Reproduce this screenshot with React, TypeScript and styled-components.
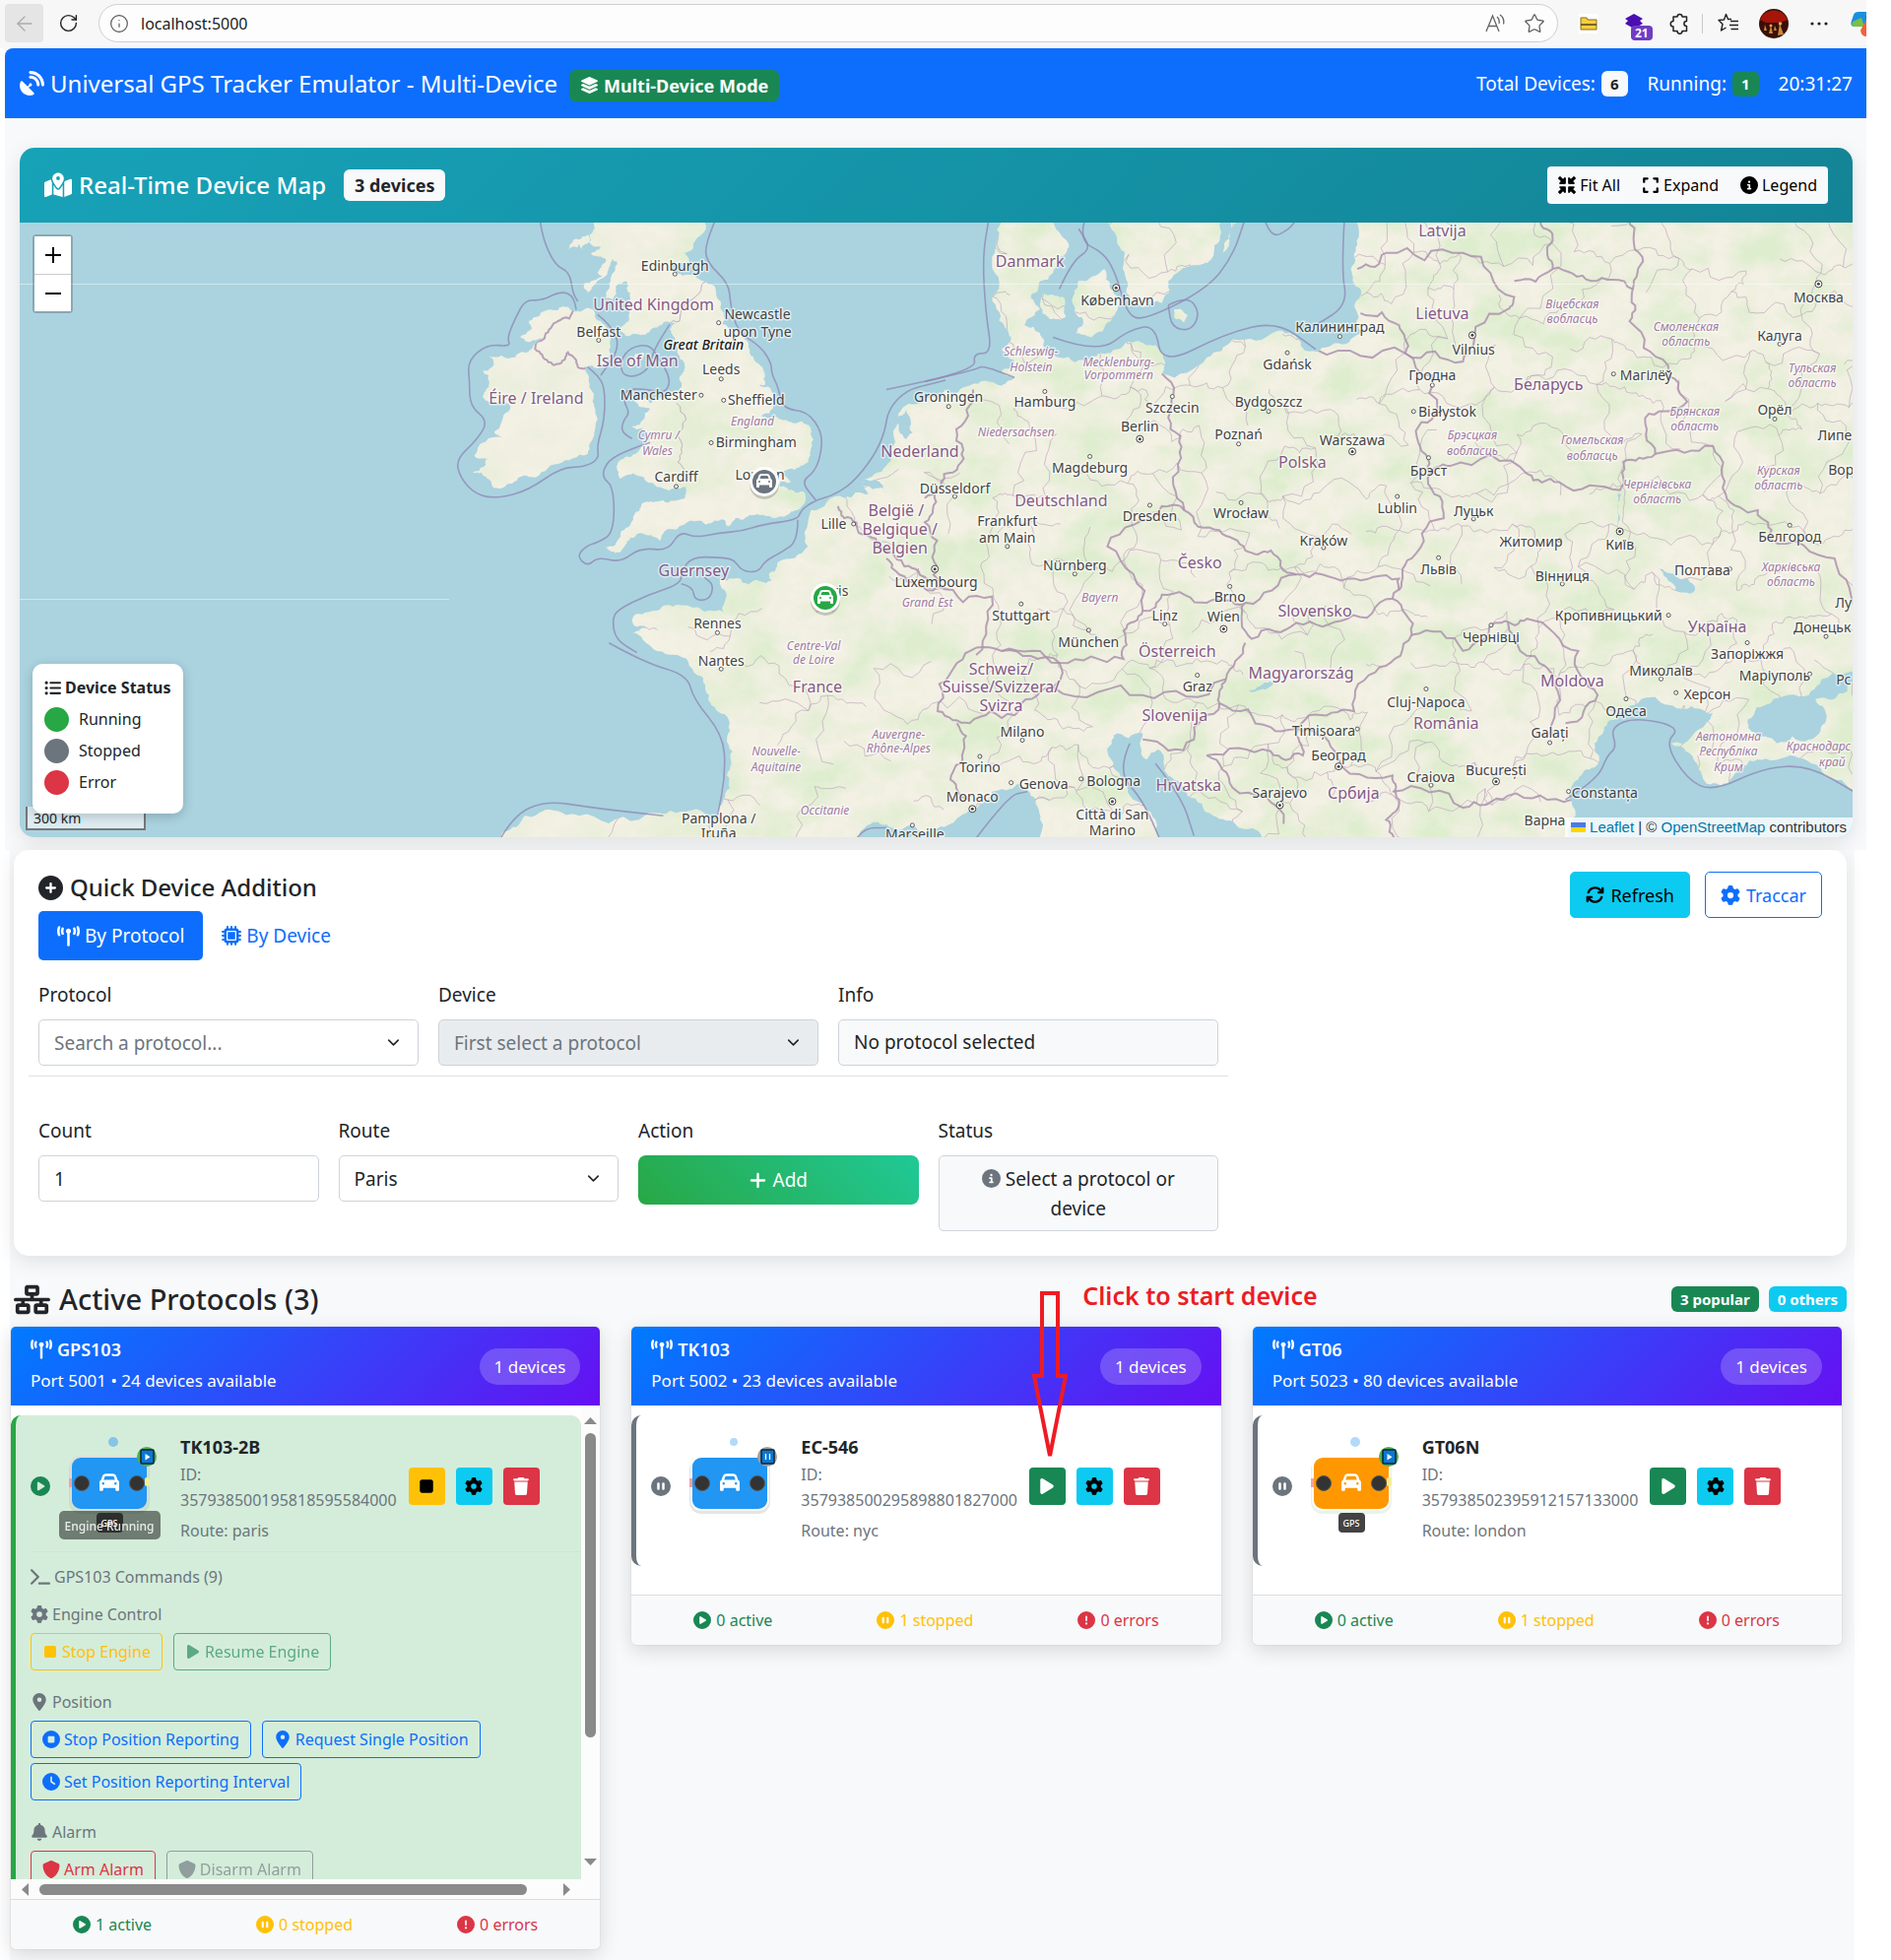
import React from "react";
import styled, { createGlobalStyle, css } from "styled-components";
import {
  FaSatelliteDish, FaLayerGroup, FaMapLocationDot, FaMinimize, FaExpand, FaCircleInfo, FaListUl,
  FaCirclePlus, FaTowerBroadcast, FaMicrochip, FaArrowsRotate, FaGear, FaPlus, FaNetworkWired,
  FaCirclePlay, FaCirclePause, FaCircleExclamation, FaTerminal, FaStop, FaPlay, FaLocationDot,
  FaCircleStop, FaClock, FaBell, FaShield, FaTrash, FaCar,
} from "react-icons/fa6";
import { ArrowLeft, RotateCw, Info, Star, Puzzle, ChevronDown } from "lucide-react";

const font = '"Noto Sans", "Open Sans", sans-serif';

const GlobalStyle = createGlobalStyle`
  *, *::before, *::after { box-sizing: border-box; }
  body { margin: 0; background: #fff; color: #212529; font-family: ${font}; font-size: 19px; line-height: 30px; }
  button, input, select { font: inherit; color: inherit; margin: 0; }
  button { cursor: pointer; }
  h1, h2, h3, h4, p, ul { margin: 0; padding: 0; font-weight: 400; list-style: none; }
`;

/* ---------- browser chrome ---------- */

const Chrome = styled.div`
  display: flex;
  align-items: center;
  height: 49px;
  margin-right: 25px;
  padding: 0 0 2px 5px;
  background: #f7f7f7;
  overflow: hidden;
`;
const ChromeButton = styled.button<{ $muted?: boolean }>`
  display: grid;
  place-items: center;
  flex: none;
  width: 39px;
  height: 39px;
  padding: 0;
  margin-right: 6px;
  border: 0;
  border-radius: 4px;
  background: ${(p) => (p.$muted ? "#e5e5e5" : "transparent")};
  color: ${(p) => (p.$muted ? "#ababab" : "#222")};
`;
const AddressBar = styled.label`
  display: flex;
  align-items: center;
  flex: 1;
  gap: 12px;
  height: 39px;
  margin: 0 8px 0 5px;
  padding: 0 12px 0 10px;
  border: 1px solid #cfcfcf;
  border-radius: 20px;
  background: #fdfdfd;
  color: #555;
`;
const AddressInput = styled.input`
  flex: 1;
  min-width: 0;
  padding: 0;
  border: 0;
  outline: 0;
  background: transparent;
  color: #222;
  font-size: 16px;
`;
const ChromeIcons = styled.div`
  display: flex;
  align-items: center;
  gap: 18px;
`;
const Slot = styled.div`
  position: relative;
  display: grid;
  place-items: center;
  flex: none;
  width: 46px;
  height: 39px;
  color: #222;
`;
const Tools = styled.div`
  display: flex;
  align-items: center;
  width: 305px;
`;
const ToolDivider = styled.div`
  flex: none;
  width: 4px;
  height: 20px;
  border-left: 1px solid #c9c9c9;
`;
const CountBadge = styled.span`
  position: absolute;
  left: 20px;
  top: 22px;
  padding: 0 4px;
  border-radius: 4px;
  background: #6f3cc3;
  color: #fff;
  font-size: 12px;
  font-weight: 700;
  line-height: 15px;
`;

/* ---------- page shell ---------- */

const TopSection = styled.section`
  margin: 0 25px 0 5px;
  background: #f8f9fa;
`;
const Navbar = styled.header`
  display: flex;
  align-items: center;
  justify-content: space-between;
  height: 71px;
  padding: 0 14px 0 15px;
  border-top-left-radius: 8px;
  background: #0d6efd;
  color: #fff;
`;
const Brand = styled.h1`
  display: flex;
  align-items: center;
  gap: 6px;
  font-size: 24px;
`;
const Stats = styled.div`
  display: flex;
  align-items: center;
  gap: 20px;
`;
const Stat = styled.span`
  display: flex;
  align-items: center;
  gap: 6px;
`;
const tones = {
  green: "background:#198754;color:#fff;",
  light: "background:#f8f9fa;color:#212529;",
  cyan: "background:#0dcaf0;color:#fff;",
};
const Badge = styled.span<{ $tone: keyof typeof tones; $large?: boolean }>`
  display: inline-flex;
  align-items: center;
  gap: 5px;
  padding: ${(p) => (p.$large ? "0 11px" : "0 9px")};
  border-radius: 6px;
  font-size: ${(p) => (p.$large ? 18 : 15)}px;
  font-weight: 700;
  line-height: ${(p) => (p.$large ? 32 : 26)}px;
  ${(p) => tones[p.$tone]}
`;
const BrandBadge = styled.span`
  display: flex;
  margin: 4px 0 0 6px;
`;

/* ---------- map ---------- */

const MapArea = styled.div`
  padding: 30px 14px 13px 15px;
`;
const MapCard = styled.section`
  border-radius: 15px;
  overflow: hidden;
  box-shadow: 0 5px 20px rgba(0, 0, 0, 0.1);
`;
const MapHeader = styled.div`
  display: flex;
  align-items: center;
  justify-content: space-between;
  height: 76px;
  padding: 0 25px;
  background: linear-gradient(135deg, #17a2b8, #138496);
  color: #fff;
`;
const MapTitle = styled.h2`
  display: flex;
  align-items: center;
  gap: 7px;
  font-size: 24px;
  font-weight: 500;
`;
const MapButtons = styled.div`
  display: flex;
  height: 38px;
  border-radius: 4px;
  background: #f8f9fa;
`;
const MapButton = styled.button`
  display: flex;
  align-items: center;
  gap: 4px;
  padding: 0 11px;
  border: 0;
  background: transparent;
  color: #000;
  font-size: 16px;
`;
const MapView = styled.div`
  position: relative;
  height: 624px;
  background: #aad3df;
  overflow: hidden;
`;
const MapDrawing = styled.svg`
  display: block;
  width: 100%;
  height: 100%;
`;
const ZoomControl = styled.div`
  position: absolute;
  left: 13px;
  top: 12px;
  display: grid;
  border: 2px solid rgba(0, 0, 0, 0.2);
  border-radius: 4px;
  background-clip: padding-box;
`;
const ZoomButton = styled.button`
  display: grid;
  place-items: center;
  width: 37px;
  height: 38px;
  padding: 0;
  border: 0;
  background: #fff;
  color: #000;
  & + & { border-top: 1px solid #ccc; }
`;
const Legend = styled.div`
  position: absolute;
  left: 13px;
  bottom: 24px;
  z-index: 2;
  padding: 8px 12px 16px;
  border-radius: 10px;
  background: #fff;
  box-shadow: 0 3px 12px rgba(0, 0, 0, 0.2);
  font-size: 16px;
  line-height: 32px;
`;
const LegendTitle = styled.h3`
  display: flex;
  align-items: center;
  gap: 4px;
  font-size: 16px;
  font-weight: 700;
`;
const LegendRow = styled.li`
  display: flex;
  align-items: center;
  gap: 10px;
`;
const Dot = styled.i<{ $color: string }>`
  width: 25px;
  height: 25px;
  border-radius: 50%;
  background: ${(p) => p.$color};
`;
const Scale = styled.div`
  position: absolute;
  left: 6px;
  bottom: 7px;
  width: 122px;
  height: 24px;
  padding: 2px 0 0 6px;
  border: 2px solid #777;
  border-top: 0;
  background: rgba(255, 255, 255, 0.6);
  font-size: 14px;
  line-height: 20px;
`;
const Attribution = styled.div`
  position: absolute;
  right: 0;
  bottom: 0;
  display: flex;
  align-items: center;
  gap: 4px;
  padding: 0 6px;
  background: rgba(255, 255, 255, 0.8);
  color: #333;
  font-family: "Liberation Sans", sans-serif;
  font-size: 15px;
  line-height: 20px;
  a { color: #0078a8; text-decoration: none; }
`;

/* ---------- quick addition ---------- */

const LowerSection = styled.section`
  margin: 0 37px 0 10px;
  background: #f8f9fa;
`;
const QuickCard = styled.section`
  margin: 0 8px 0 4px;
  padding: 22px 25px 25px;
  border-radius: 15px;
  background: #fff;
  box-shadow: 0 5px 20px rgba(0, 0, 0, 0.1);
`;
const QuickHead = styled.div`
  display: flex;
  justify-content: space-between;
  height: 40px;
`;
const QuickTitle = styled.h2`
  display: flex;
  align-items: center;
  gap: 7px;
  height: 32px;
  font-size: 24px;
  font-weight: 500;
`;
const Row = styled.div<{ $gap: number }>`
  display: flex;
  gap: ${(p) => p.$gap}px;
`;
const ActionButton = styled.button<{ $outline?: boolean }>`
  display: flex;
  align-items: center;
  gap: 6px;
  height: 47px;
  padding: 0 15px;
  border: 1px solid ${(p) => (p.$outline ? "#0d6efd" : "#0dcaf0")};
  border-radius: 5px;
  background: ${(p) => (p.$outline ? "#fff" : "#0dcaf0")};
  color: ${(p) => (p.$outline ? "#0d6efd" : "#000")};
  font-size: 18px;
`;
const Tab = styled.button<{ $active?: boolean }>`
  display: flex;
  align-items: center;
  gap: 5px;
  height: 50px;
  padding: 0 19px;
  border: 0;
  border-radius: 5px;
  background: ${(p) => (p.$active ? "#0d6efd" : "transparent")};
  color: ${(p) => (p.$active ? "#fff" : "#0d6efd")};
`;
const FormColumns = styled.div`
  display: grid;
  grid-template-columns: 2fr 1fr;
  gap: 14px;
  padding-top: 20px;
`;
const FieldGrid = styled.div<{ $columns: number }>`
  display: grid;
  grid-template-columns: repeat(${(p) => p.$columns}, 1fr);
  align-items: start;
  gap: 20px;
`;
const Rule = styled.hr`
  margin: 10px -10px 40px;
  border: 0;
  border-top: 1px solid #dee2e6;
`;
const Field = styled.div`
  display: grid;
  gap: 10px;
`;
const controlBox = css`
  width: 100%;
  border: 1px solid #ced4da;
  border-radius: 5px;
  padding: 0 15px;
`;
const TextInput = styled.input`
  ${controlBox}
  height: 47px;
  background: #fff;
`;
const SelectWrap = styled.div`
  position: relative;
  svg { position: absolute; right: 16px; top: 14px; pointer-events: none; }
`;
const Select = styled.select<{ $placeholder?: boolean }>`
  ${controlBox}
  height: 47px;
  appearance: none;
  background: #fff;
  color: ${(p) => (p.$placeholder ? "#6c757d" : "#212529")};
  opacity: 1;
  &:disabled { background: #e9ecef; }
`;
const Notice = styled.output<{ $center?: boolean }>`
  ${controlBox}
  display: block;
  padding: ${(p) => (p.$center ? "8px 34px 7px" : "8px 15px")};
  background: #f8f9fa;
  text-align: ${(p) => (p.$center ? "center" : "left")};
  line-height: ${(p) => (p.$center ? 30 : 29)}px;
  svg { color: #6c757d; vertical-align: -2px; margin-right: 5px; }
`;
const AddButton = styled.button`
  display: flex;
  align-items: center;
  justify-content: center;
  gap: 5px;
  height: 50px;
  border: 0;
  border-radius: 8px;
  background: linear-gradient(45deg, #28a745, #20c997);
  color: #fff;
`;

/* ---------- protocol cards ---------- */

const ProtocolHead = styled.div`
  display: flex;
  align-items: center;
  justify-content: space-between;
  height: 72px;
  padding: 16px 8px 0 4px;
`;
const ProtocolTitle = styled.h2`
  display: flex;
  align-items: center;
  gap: 9px;
  font-size: 29px;
  font-weight: 500;
`;
const CardGrid = styled.div`
  display: grid;
  grid-template-columns: repeat(3, 1fr);
  align-items: start;
  gap: 32px;
  padding: 0 13px 12px 1px;
`;
const CardSlot = styled.div`
  position: relative;
`;
const Card = styled.article`
  border-radius: 5px;
  overflow: hidden;
  background: #fff;
  box-shadow: 0 5px 20px rgba(0, 0, 0, 0.14), 0 0 1px rgba(0, 0, 0, 0.3);
`;
const CardHead = styled.div`
  display: flex;
  align-items: center;
  justify-content: space-between;
  height: 80px;
  padding: 0 20px;
  background: linear-gradient(135deg, #007bff, #6610f2);
  color: #fff;
`;
const CardName = styled.h3`
  display: flex;
  align-items: center;
  gap: 5px;
  font-size: 18px;
  font-weight: 600;
`;
const CardPort = styled.p`
  padding-top: 2px;
  padding-bottom: 3px;
  font-size: 17px;
`;
const Pill = styled.span`
  padding: 0 15px;
  border-radius: 19px;
  background: rgba(255, 255, 255, 0.2);
  font-size: 17px;
  line-height: 37px;
`;
const ScrollBody = styled.div`
  display: grid;
  grid-template-columns: 1fr 19px;
`;
const Viewport = styled.div<{ $clipped?: boolean }>`
  padding-top: 10px;
  ${(p) => (p.$clipped ? "max-height: 481px; overflow: hidden;" : "padding-bottom: 29px;")}
`;
const DeviceItem = styled.div<{ $running?: boolean }>`
  min-height: 153px;
  padding: 18px 0 6px 15px;
  border-left: 5px solid ${(p) => (p.$running ? "#28a745" : "#6c757d")};
  border-radius: 10px;
  background: ${(p) => (p.$running ? "#d4edda" : "#fff")};
`;
const DeviceRow = styled.div`
  display: flex;
  align-items: center;
`;
const StatusIcon = styled.span<{ $running?: boolean }>`
  display: flex;
  color: ${(p) => (p.$running ? "#198754" : "#6c757d")};
`;
const Avatar = styled.svg`
  flex: none;
  width: 112px;
  height: 124px;
  margin: -8px 12px -8px 8px;
`;
const DeviceInfo = styled.div`
  margin-bottom: -4px;
  color: #6c757d;
  font-size: 16px;
  line-height: 26px;
`;
const DeviceName = styled.h4`
  padding-bottom: 2px;
  color: #212529;
  font-size: 18px;
  font-weight: 700;
`;
const Route = styled.p`
  padding-top: 5px;
`;
const DeviceButtons = styled.div`
  display: flex;
  gap: 11px;
  padding-left: 12px;
`;
const buttonTones = {
  yellow: "background:#ffc107;color:#000;",
  green: "background:#198754;color:#fff;",
  cyan: "background:#0dcaf0;color:#000;",
  red: "background:#dc3545;color:#fff;",
};
const IconButton = styled.button<{ $tone: keyof typeof buttonTones }>`
  display: grid;
  place-items: center;
  width: 37px;
  height: 38px;
  padding: 0;
  border: 0;
  border-radius: 4px;
  ${(p) => buttonTones[p.$tone]}
`;
const Commands = styled.div`
  margin-top: 12px;
  padding-top: 12px;
  border-top: 1px solid rgba(0, 0, 0, 0.03);
  color: #6c757d;
  font-size: 16px;
  line-height: 26px;
`;
const CommandLabel = styled.div`
  display: flex;
  align-items: center;
  gap: 4px;
`;
const CommandGroup = styled.div`
  padding: 12px 0 7px;
`;
const CommandButtons = styled.div`
  display: flex;
  flex-wrap: wrap;
  gap: 5px 11px;
  padding-top: 6px;
`;
const CommandButton = styled.button<{ $color: string; $faded?: boolean }>`
  display: flex;
  align-items: center;
  gap: 4px;
  height: 38px;
  padding: 0 11px;
  border: 1px solid ${(p) => p.$color};
  border-radius: 4px;
  background: transparent;
  color: ${(p) => p.$color};
  opacity: ${(p) => (p.$faded ? 0.65 : 1)};
`;
const VerticalBar = styled.div`
  display: flex;
  flex-direction: column;
  align-items: center;
  padding: 9px 0 11px;
  background: #fcfcfc;
`;
const HorizontalBar = styled.div`
  display: flex;
  align-items: center;
  height: 20px;
  padding: 0 27px 0 8px;
  background: #fcfcfc;
`;
const Arrow = styled.svg`
  flex: none;
  width: 13px;
  height: 13px;
  fill: #8a8a8a;
`;
const Track = styled.div<{ $vertical?: boolean }>`
  flex: 1;
  display: flex;
  padding: ${(p) => (p.$vertical ? "6px 0" : "0 8px")};
`;
const Thumb = styled.div<{ $vertical?: boolean }>`
  ${(p) => (p.$vertical ? "width: 11px; height: 73%;" : "height: 11px; width: 95%;")}
  border-radius: 6px;
  background: #8a8a8a;
`;
const CardFoot = styled.footer`
  display: flex;
  align-items: center;
  justify-content: space-around;
  height: 51px;
  padding: 0 10px;
  border-top: 1px solid #dcdddd;
  background: #f8f9fa;
  font-size: 16px;
`;
const Tally = styled.span<{ $color: string }>`
  display: flex;
  align-items: center;
  gap: 5px;
  color: ${(p) => p.$color};
`;
const Callout = styled.div`
  position: absolute;
  left: 407px;
  top: -47px;
  z-index: 3;
  display: flex;
  align-items: flex-start;
  gap: 15px;
  color: #ed1c24;
  font-size: 25px;
  font-weight: 600;
  white-space: nowrap;
  pointer-events: none;
`;
const CalloutArrow = styled.svg`
  width: 36px;
  height: 176px;
  margin-top: 10px;
`;

/* ---------- map geometry ---------- */

type Pt = [number, number];

const pairs = (s: string): Pt[] => s.trim().split(/\s+/).map((p) => p.split(",").map(Number) as Pt);
/* survey sheets, each with its own scale, share the same drawing */
const west = (s: string): Pt[] => pairs(s).map(([x, y]) => [x * 0.6122 - 20, y * 0.4082 - 6]);
const east = (s: string): Pt[] => pairs(s).map(([x, y]) => [x * 0.6505 + 880, y * 0.4082 - 6]);
const isles = (s: string): Pt[] => pairs(s).map(([x, y]) => [x / 3 + 420, y / 3]);

const makeRandom = (seed: number) => () => {
  seed = (seed * 1664525 + 1013904223) % 4294967296;
  return seed / 4294967296;
};

/* midpoint displacement turns coarse outlines into coast-like lines */
function roughen(points: Pt[], amount: number, depth: number, seed = 7): Pt[] {
  const rnd = makeRandom(seed + Math.round(points[0][0] * 13));
  let list = points;
  for (let d = 0; d < depth; d++) {
    const next: Pt[] = [];
    for (let i = 0; i < list.length - 1; i++) {
      const [ax, ay] = list[i];
      const [bx, by] = list[i + 1];
      const len = Math.hypot(bx - ax, by - ay);
      const off = (rnd() - 0.5) * amount * len;
      next.push(list[i], [(ax + bx) / 2 - ((by - ay) / (len || 1)) * off, (ay + by) / 2 + ((bx - ax) / (len || 1)) * off]);
    }
    next.push(list[list.length - 1]);
    list = next;
  }
  return list;
}
const line = (pts: Pt[]) => "M" + pts.map(([x, y]) => `${x.toFixed(1)} ${y.toFixed(1)}`).join("L");
const area = (pts: Pt[]) => line(roughen([...pts, pts[0]], 0.4, 3)) + "Z";
const smooth = (pts: Pt[]) => {
  let d = `M${pts[0][0]} ${pts[0][1]}`;
  for (let i = 1; i < pts.length - 1; i++) {
    d += `Q${pts[i][0]} ${pts[i][1]} ${(pts[i][0] + pts[i + 1][0]) / 2} ${(pts[i][1] + pts[i + 1][1]) / 2}`;
  }
  const end = pts[pts.length - 1];
  return d + `L${end[0]} ${end[1]}`;
};

const continent: Pt[] = [
  ...east("92,430 130,420 180,420 200,400 180,385 200,360 180,330 195,300 185,275 165,200 165,100 175,50 180,-20 260,-20 285,70 270,110 260,140 240,160 225,200 240,230 215,270 240,290 245,320 270,350 320,350 350,340 390,310 420,320 430,390 500,350 540,305 610,285 640,300 660,335 700,315 740,290 735,240 740,180 725,130 735,70 730,-10"),
  ...east("760,-700 2200,-700 2500,800 2200,2600 300,2600 245,1600 240,1500 225,1440 205,1410 165,1430 130,1475 100,1510 60,1535"),
  ...west("1500,1520 1460,1510 1430,1525 1415,1580 1400,2100 825,2100 820,1580 835,1530 870,1490 905,1475 960,1490 1060,1500 1130,1480 1190,1500 1200,1450 1206,1390 1215,1330 1210,1260 1180,1215 1170,1165 1150,1130 1130,1095 1080,1070 1050,1035 1075,1025 1055,1020 1050,995 1090,980 1125,965 1165,980 1200,985 1195,900 1215,900 1240,915 1280,905 1275,890 1290,860 1340,820 1345,730 1400,700 1440,690 1430,660 1470,620 1485,560 1490,490 1530,460"),
];
const lands: Pt[][] = [
  continent,
  isles("470,-20 490,20 475,60 510,75 480,95 525,110 500,150 515,165 460,185 470,215 490,190 530,150 545,110 560,120 540,170 525,230 545,235 555,195 590,180 600,215 585,250 600,270 570,320 590,345 620,340 660,330 700,305 735,305 720,325 735,350 745,400 765,430 750,470 750,510 700,535 660,550 610,540 625,560 660,565 640,600 605,620 640,630 660,660 630,690 600,715 558,745 570,780 620,770 650,790 700,810 770,805 765,840 700,845 650,850 625,880 600,920 560,970 525,990 565,1005 600,960 630,945 690,970 710,935 770,915 830,920 885,905 900,925 920,900 980,890 1040,900 1090,880 1130,855 1125,820 1080,815 1050,800 1090,790 1060,770 1115,745 1145,715 1158,660 1150,625 1120,605 1060,600 1040,590 1000,590 1035,565 1035,520 1015,500 960,490 1010,495 990,430 960,370 930,330 880,310 875,240 830,180 800,165 745,155 720,130 780,120 760,90 790,80 800,50 830,20 830,-20"),
  isles("395,255 355,265 290,300 300,325 265,350 300,360 340,350 300,385 250,410 165,405 185,430 150,450 170,490 150,530 200,545 235,560 210,600 185,640 210,655 125,710 180,710 150,745 120,760 165,780 180,805 240,795 300,775 380,735 470,705 490,640 490,560 475,500 465,440 530,420 540,380 520,310 490,270 440,270"),
  west("960,60 975,45 980,60 965,80"),
  isles("595,440 615,400 640,395 625,430"),
  isles("410,80 450,50 470,40 440,75"),
  east("350,-20 360,60 370,120 375,190 400,225 430,215 440,160 480,120 500,115 520,60 530,-20"),
  east("245,190 275,200 280,250 255,255 240,220"),
  east("300,160 340,130 350,180 365,200 350,260 320,300 295,290 305,250 290,210"),
  east("450,230 470,245 465,265 452,255"),
  east("530,60 545,15 548,5 535,5 525,90"),
];
const waters: Pt[][] = [
  east("355,1290 400,1285 405,1350 425,1325 440,1390 470,1440 510,1490 550,1520 610,1600 430,1600 420,1500 380,1440 370,1400 345,1330"),
  east("1050,1640 1065,1540 1065,1440 1080,1400 1105,1370 1105,1310 1120,1270 1150,1230 1200,1195 1245,1225 1290,1235 1280,1260 1225,1310 1265,1360 1280,1410 1320,1395 1360,1350 1410,1340 1460,1380 1520,1430 1700,1500 1700,1900"),
  east("1345,1250 1380,1210 1440,1190 1460,1150 1530,1130 1500,1180 1450,1200 1465,1260 1440,1300 1390,1310 1350,1280"),
  east("1200,870 1230,890 1262,930 1250,935 1220,905"),
  east("1141,690 1147,690 1145,750 1140,770"),
  east("565,1180 600,1155 605,1160 575,1182"),
  isles("1410,600 1440,570 1460,640 1440,660"),
  isles("1310,780 1360,790 1370,810 1310,800"),
];
const nationalBorders = [
  "60,700 90,640 120,580 125,480 135,430", "80,920 165,945 140,1090",
  "110,1110 180,1080 270,1110 260,1170 200,1240 130,1260 80,1230 110,1110", "110,1260 120,1330 100,1400 130,1450",
  "180,1080 270,1110 370,1100 370,1030 400,980 345,820 430,720 465,730", "430,390 440,500 460,600 465,730 520,780 560,830 600,830 640,890",
  "400,980 430,940 500,960 560,960 640,890 720,900 800,900 790,950 720,1000 640,1010 570,1050 560,960",
  "800,930 820,850 870,750 845,650 830,560 860,480 810,340 670,330", "740,240 800,270 810,340 900,360 970,230 980,200 900,90 780,90 735,130",
  "980,160 1040,130 1100,160 1165,180 1160,260 1220,370 1250,460 1190,490 1200,590 1150,610 1145,680 1050,660 1000,640 880,620 845,650",
  "1040,130 1040,60 1020,5", "1200,590 1290,570 1310,690 1360,730 1380,800 1480,850 1520,1000",
  "790,950 820,1040 900,1080 960,1010 1000,1000 1080,1080 1110,1190 1060,1260", "970,1010 1030,1120 1040,1290",
  "560,1060 530,1150 520,1210 600,1270 660,1240 730,1230 770,1120 820,1040", "260,1170 400,1190 530,1150", "400,1300 480,1300 520,1210",
  "500,1340 600,1330 650,1340 640,1270 700,1330 790,1390 800,1450 780,1500 790,1560", "500,1340 540,1420 620,1510", "790,1430 900,1470 970,1440 1070,1450",
  "1165,180 1180,100 1160,5", "0,850 20,890 80,920 75,860 60,760 75,690",
].map(east).concat([
  west("1390,720 1400,750 1430,790 1465,830 1500,870 1540,910"),
  isles("435,265 380,300 340,345 310,385 350,425 385,430 410,395 440,440 470,440"),
]);
const regionBorders = [
  isles("740,550 770,600 745,650 755,690 745,730 780,760"),
  isles("830,180 810,215 750,300 715,310"),
];
const seaBorders = [
  isles("325,-10 330,40 370,130 415,150 425,215 440,240"),
  isles("435,265 430,225 390,208 330,238 280,235 250,290 225,350 235,378 165,370 105,420 110,485 112,560 168,605 130,665 70,720 80,775 130,830 200,840 290,815 390,745 460,745 505,720 498,680 522,600 522,500 500,465 470,440"),
  isles("860,-10 828,65 832,120 900,185 905,250 925,330 1000,380 1030,430 1030,460 1050,500 1065,568 1140,575 1185,640 1180,710 1160,760 1120,790 1165,845"),
  isles("605,658 570,640 580,600 598,580 580,545 585,510 640,505 700,520 720,495 715,460 690,420 660,370 600,380 570,420 575,465 620,470 660,440 670,390 720,310"),
  isles("500,280 540,310 570,380 510,465"),
  isles("660,670 600,690 530,725 512,775 550,805 550,945 500,975 470,982 436,1015 470,1048 500,1018 570,1036 630,990 715,1000 750,940 800,960 870,945 940,940 1000,920 1110,905 1120,875 1165,845 1215,832 1275,795 1340,715 1375,640 1385,570 1440,510 1520,490 1560,480"),
  isles("1110,905 1110,970 1060,1005 1010,1030 990,1065 940,1062 915,1025 870,1020 790,1018 755,1060 755,1100 650,1135 560,1180 545,1210 555,1270 620,1310"),
  isles("755,1100 790,1108 795,1150 840,1150 855,1105 825,1080"),
  west("1010,1060 1070,1110 1140,1140 1150,1200 1200,1290 1203,1390 1190,1490"), west("825,1560 850,1490 905,1452 980,1470 1100,1490"),
  west("1415,1560 1430,1520 1470,1520"),
  east("60,410 140,380 135,340 165,340 155,240 150,100 160,5"), east("0,430 60,410 140,380 150,370 200,400"),
  east("310,5 300,60 340,90 360,150 375,240 400,260 500,180 540,100 560,5"), east("260,300 330,340 380,280 420,270 430,370 530,290 610,260 670,330"),
  east("440,220 470,195 490,240 475,285 445,275 440,220"), east("590,5 600,55 630,30 640,5"), east("715,5 710,130 720,220 670,270"),
  east("270,180 290,110 320,80 300,30"), east("140,1546 190,1440 220,1430"), east("380,1310 360,1380 400,1450 430,1560"), east("420,1360 460,1440 480,1540"),
  east("1060,1450 1110,1400 1125,1340 1140,1320 1130,1270 1170,1245 1240,1270 1215,1310 1250,1400 1290,1430 1370,1370 1440,1365 1510,1430"),
];

/* jittered grid of administrative lines */
function adminLines(): string {
  const rnd = makeRandom(42);
  const cols = 42;
  const rows = 15;
  const grid: Pt[][] = [];
  for (let r = 0; r < rows; r++) {
    grid.push([]);
    for (let c = 0; c < cols; c++) grid[r].push([540 + c * 34 + (rnd() - 0.5) * 30 + (r % 2) * 16, r * 46 - 10 + (rnd() - 0.5) * 32]);
  }
  let d = "";
  for (let r = 0; r < rows - 1; r++) {
    for (let c = 0; c < cols - 1; c++) {
      if (c < 8 && r < 8) continue;
      if (c < 13 && rnd() < 0.55) continue;
      if (rnd() < 0.72) d += line(roughen([grid[r][c], grid[r][c + 1]], 0.6, 3, r * 50 + c));
      if (rnd() < 0.5) d += line(roughen([grid[r][c], grid[r + 1][c]], 0.6, 3, r * 70 + c));
    }
  }
  return d;
}

const landPath = lands.map(area).join("");
const adminPath = adminLines();

/* label positions are on a 1513-wide sheet */
const K = 1.269;
type Label = [string, number, number];
const countries: Label[] = [
  ["United Kingdom", 523, 244], ["Isle of Man", 510, 289], ["Éire / Ireland", 429, 319], ["Danmark", 824, 210], ["Latvija", 1154, 185],
  ["Lietuva", 1154, 251], ["Беларусь", 1239, 308], ["Polska", 1042, 370], ["Nederland", 736, 362], ["België /", 717, 409],
  ["Belgique /", 720, 424], ["Belgien", 720, 439], ["Deutschland", 849, 401], ["Guernsey", 555, 457], ["France", 654, 550],
  ["Česko", 960, 451], ["Slovensko", 1052, 489], ["Österreich", 942, 522], ["Schweiz/", 801, 536], ["Suisse/Svizzera/", 801, 550],
  ["Svizra", 801, 565], ["Magyarország", 1041, 539], ["Slovenija", 940, 573], ["Hrvatska", 951, 629], ["Србија", 1083, 635],
  ["România", 1157, 579], ["Moldova", 1258, 545], ["Україна", 1374, 502],
];
const regions: Label[] = [
  ["England", 602, 338], ["Cymru /", 527, 349], ["Wales", 526, 361], ["Schleswig-", 825, 282], ["Holstein", 825, 294], ["Mecklenburg-", 895, 290],
  ["Vorpommern", 895, 301], ["Niedersachsen", 813, 346], ["Віцебская", 1258, 244], ["вобласць", 1258, 256], ["Смоленская", 1349, 262], ["область", 1349, 274],
  ["Тульская", 1450, 295], ["область", 1450, 307], ["Брянская", 1356, 330], ["область", 1356, 342], ["Брэсцкая", 1178, 349], ["вобласць", 1178, 361],
  ["Гомельская", 1274, 353], ["вобласць", 1274, 365], ["Чернігівська", 1326, 388], ["область", 1326, 400], ["Курская", 1423, 377], ["область", 1423, 389],
  ["Харківська", 1433, 454], ["область", 1433, 466], ["Grand Est", 742, 483], ["Bayern", 880, 479], ["Centre-Val", 651, 517], ["de Loire", 651, 528],
  ["Auvergne-", 719, 588], ["Rhône-Alpes", 719, 599], ["Nouvelle-", 621, 602], ["Aquitaine", 621, 614], ["Occitanie", 660, 649],
  ["Автономна", 1383, 590], ["Республіка", 1383, 602], ["Крим", 1383, 614], ["Краснодарс", 1455, 598], ["край", 1466, 610],
];
/* name, x, y, then the town dot */
const cities: [string, number, number, number?, number?][] = [
  ["Edinburgh", 540, 213, 540, 220], ["Newcastle", 606, 252, 575, 259], ["upon Tyne", 606, 266], ["Belfast", 479, 266, 479, 273],
  ["Leeds", 577, 296, 577, 304], ["Manchester", 527, 316, 561, 317], ["Sheffield", 605, 320, 579, 321], ["Birmingham", 605, 354, 569, 355],
  ["Cardiff", 541, 382, 541, 390], ["London", 608, 380], ["Lille", 667, 420, 683, 420], ["Paris", 666, 473], ["Rennes", 574, 499, 574, 507],
  ["Nantes", 577, 529, 577, 536], ["Pamplona /", 575, 655], ["Iruña", 575, 667], ["Marseille", 732, 668, 730, 661], ["København", 894, 241],
  ["Калининград", 1072, 262, 1072, 270], ["Vilnius", 1179, 280], ["Калуга", 1424, 269, 1424, 276], ["Москва", 1455, 238],
  ["Gdańsk", 1030, 292, 1030, 283], ["Гродна", 1146, 301, 1146, 309], ["Магілёў", 1317, 301, 1291, 300], ["Groningen", 759, 318, 759, 326],
  ["Hamburg", 836, 322, 836, 314], ["Szczecin", 938, 327, 938, 318], ["Bydgoszcz", 1015, 322, 1015, 330], ["Białystok", 1158, 330, 1131, 330],
  ["Орёл", 1420, 328, 1420, 336], ["Berlin", 912, 342], ["Poznań", 991, 348, 991, 356], ["Warszawa", 1082, 353], ["Липе", 1468, 349],
  ["Magdeburg", 872, 375, 872, 366], ["Брэст", 1143, 377, 1143, 367], ["Вор", 1473, 376], ["Düsseldorf", 764, 391, 764, 398],
  ["Dresden", 920, 413, 920, 405], ["Wrocław", 993, 411, 993, 403], ["Lublin", 1118, 407, 1118, 398], ["Луцьк", 1179, 409, 1179, 416],
  ["Frankfurt", 806, 417], ["am Main", 806, 431, 806, 438], ["Kraków", 1059, 433, 1059, 439], ["Житомир", 1225, 434, 1248, 433],
  ["Київ", 1296, 436], ["Белгород", 1432, 430, 1432, 421], ["Nürnberg", 860, 453, 860, 460], ["Львів", 1151, 456, 1151, 447],
  ["Вінниця", 1250, 461, 1250, 468], ["Полтава", 1362, 457, 1384, 456], ["Luxembourg", 749, 466], ["Brno", 984, 478, 984, 470],
  ["Stuttgart", 817, 493, 817, 484], ["Linz", 932, 493, 932, 500], ["Wien", 979, 494], ["Кропивницький", 1287, 493, 1335, 493], ["Лу", 1475, 483],
  ["München", 871, 514, 871, 505], ["Чернівці", 1193, 510, 1193, 501], ["Донецьк", 1458, 502, 1461, 510], ["Запоріжжя", 1398, 524, 1398, 515],
  ["Миколаїв", 1329, 537, 1329, 544], ["Маріуполь", 1420, 541, 1448, 540], ["Graz", 958, 550, 958, 541], ["Cluj-Napoca", 1141, 562, 1141, 552],
  ["Херсон", 1366, 556, 1341, 555], ["Одеса", 1301, 569, 1301, 560], ["Milano", 818, 586, 818, 593], ["Timișoara", 1059, 585, 1086, 584],
  ["Galați", 1240, 587, 1240, 595], ["Torino", 784, 614, 784, 606], ["Београд", 1071, 605], ["Genova", 835, 628, 809, 627],
  ["Bologna", 891, 625, 865, 624], ["București", 1197, 617], ["Craiova", 1145, 622, 1145, 629], ["Monaco", 778, 638], ["Sarajevo", 1024, 635],
  ["Constanța", 1284, 635, 1255, 634], ["Città di San", 890, 652], ["Marino", 890, 665], ["Варна", 1236, 657], ["Рс", 1475, 544],
];
const capitals: Pt[] = [
  [893, 231], [1178, 269], [1455, 228], [912, 352], [1082, 362], [1296, 426], [748, 456], [979, 504], [1071, 614], [1197, 626], [778, 648], [1024, 645], [890, 642],
];
const mx = (x: number) => x * K - 20;
const my = (y: number) => y * K - 227;

const MapLabel = styled.text<{ $kind: "country" | "region" | "city" | "island" }>`
  font-family: "Noto Sans", "DejaVu Sans", sans-serif;
  font-size: ${(p) => ({ country: 16, region: 12, city: 14, island: 14 }[p.$kind])}px;
  font-style: ${(p) => (p.$kind === "region" || p.$kind === "island" ? "italic" : "normal")};
  font-weight: ${(p) => (p.$kind === "island" ? 500 : 400)};
  fill: ${(p) => ({ country: "#855a86", region: "#a07ba3", city: "#444", island: "#222" }[p.$kind])};
  stroke: rgba(255, 255, 255, 0.6);
  stroke-width: 3px;
  stroke-linejoin: round;
  paint-order: stroke;
  text-anchor: middle;
  dominant-baseline: central;
`;

function CarMarker({ x, y, color }: { x: number; y: number; color: string }) {
  return (
    <g>
      <circle cx={x} cy={y + 3} r={15} fill="rgba(0,0,0,.18)" />
      <circle cx={x} cy={y} r={15} fill="#fff" />
      <circle cx={x} cy={y} r={12} fill={color} />
      <FaCar x={x - 8} y={y - 9} size={16} color="#fff" />
    </g>
  );
}

function EuropeMap() {
  return (
    <MapDrawing viewBox="0 0 1861 624" preserveAspectRatio="xMidYMid slice" role="img" aria-label="Map of Europe">
      <defs>
        <clipPath id="land"><path d={landPath} /></clipPath>
        <filter id="forest" x="0" y="0" width="100%" height="100%">
          <feTurbulence type="fractalNoise" baseFrequency="0.017 0.022" numOctaves={5} seed={11} />
          <feColorMatrix values="0 0 0 0 0.71  0 0 0 0 0.84  0 0 0 0 0.60  3.4 0 0 0 -1.45" />
        </filter>
        <filter id="fields" x="0" y="0" width="100%" height="100%">
          <feTurbulence type="fractalNoise" baseFrequency="0.06" numOctaves={3} seed={3} />
          <feColorMatrix values="0 0 0 0 0.80  0 0 0 0 0.87  0 0 0 0 0.68  0 3 0 0 -1.4" />
        </filter>
        <linearGradient id="fade" x1="0" x2="1">
          <stop offset="0.3" stopColor="#fff" stopOpacity="0.3" />
          <stop offset="0.42" stopColor="#fff" stopOpacity="0.9" />
        </linearGradient>
        <mask id="greens"><rect width="1861" height="624" fill="url(#fade)" /></mask>
      </defs>
      <rect width="1861" height="624" fill="#aad3df" />
      <path d={landPath} fill="#f3f0e4" />
      <g clipPath="url(#land)">
        <g mask="url(#greens)">
          <rect width="1861" height="624" filter="url(#forest)" />
          <rect width="1861" height="624" filter="url(#fields)" opacity={0.6} />
        </g>
        <path d={adminPath} fill="none" stroke="#b79fb9" strokeWidth={1} opacity={0.6} />
        {regionBorders.map((b, i) => <path key={i} d={line(roughen(b, 0.45, 2, i))} fill="none" stroke="#b79fb9" opacity={0.8} />)}
        {nationalBorders.map((b, i) => (
          <path key={i} d={line(roughen(b, 0.45, 3, i))} fill="none" stroke="#ab92ae" strokeWidth={2} opacity={0.85} />
        ))}
      </g>
      {waters.map((w, i) => <path key={i} d={area(w)} fill="#aad3df" />)}
      {seaBorders.map((b, i) => <path key={i} d={smooth(b)} fill="none" stroke="#8f86b2" strokeWidth={1.6} opacity={0.75} />)}
      <path d="M0 62.5H1861M0 382.5H436" stroke="#fff" strokeOpacity={0.45} strokeWidth={1} />
      {cities.map(([name, , , x, y]) => x && y && <circle key={name + x} cx={mx(x)} cy={my(y)} r={2} fill="#fff" stroke="#555" />)}
      {capitals.map(([x, y]) => (
        <g key={x}>
          <circle cx={mx(x)} cy={my(y)} r={3.5} fill="#fff" stroke="#444" />
          <circle cx={mx(x)} cy={my(y)} r={1.5} fill="#444" />
        </g>
      ))}
      {regions.map(([name, x, y]) => <MapLabel key={name + x + y} $kind="region" x={mx(x)} y={my(y)}>{name}</MapLabel>)}
      {countries.map(([name, x, y]) => <MapLabel key={name} $kind="country" x={mx(x)} y={my(y)}>{name}</MapLabel>)}
      {cities.map(([name, x, y]) => <MapLabel key={name} $kind="city" x={mx(x)} y={my(y)}>{name}</MapLabel>)}
      <MapLabel $kind="island" x={mx(563)} y={my(276)}>Great Britain</MapLabel>
      <CarMarker x={756} y={263} color="#6c757d" />
      <CarMarker x={818} y={381} color="#28a745" />
    </MapDrawing>
  );
}

/* ---------- device picture ---------- */

type Device = { name: string; id: string; route: string; body: string; running?: boolean; playing?: boolean; gps?: boolean };

const Tiny = styled.text<{ $size: number }>`
  font-family: ${font};
  font-size: ${(p) => p.$size}px;
  font-weight: 500;
  fill: #fff;
  text-anchor: middle;
  dominant-baseline: central;
`;

function DevicePicture({ device }: { device: Device }) {
  const on = device.playing;
  return (
    <Avatar viewBox="0 0 112 124" role="img" aria-label={device.name}>
      <circle cx={56} cy={17} r={on ? 5 : 4} fill={device.running ? "#86c5e6" : "#b3d9fb"} />
      <rect x={11} y={33} width={82} height={57} rx={12} fill={on ? "#2e7d32" : "#000"} opacity={0.1} />
      <rect x={12} y={31} width={80} height={56} rx={11} fill={device.running ? "#dcdcdc" : "#fff"} opacity={0.8} />
      <rect x={14} y={33} width={76} height={52} rx={9} fill={device.body} />
      <rect x={11} y={54} width={3} height={9} fill="#f3a0a0" />
      {on && <rect x={88} y={53} width={5} height={9} rx={2} fill="#f6ee8f" />}
      <circle cx={24} cy={59} r={7.5} fill="#333" stroke="#555" />
      <circle cx={80} cy={59} r={7.5} fill="#333" stroke="#555" />
      <FaCar x={42} y={48} size={20} color="#fff" />
      <circle cx={90} cy={32} r={10} fill={on ? "#4caf50" : "#9e9e9e"} />
      <rect x={84} y={25} width={13} height={14} rx={1} fill="#0a78d4" stroke="#123" strokeWidth={1.5} />
      {on ? <path d="M88.500 29v6.500l5-3.250z" fill="#fff" /> : <path d="M88.500 29v6M92.500 29v6" stroke="#fff" strokeWidth={1.3} />}
      {device.running && <rect x={1} y={87} width={103} height={29} rx={5} fill="#000" opacity={0.48} />}
      {(device.running || device.gps) && <rect x={39} y={89} width={27} height={20} rx={4} fill="#222" opacity={0.85} />}
      {device.gps && <Tiny $size={9} x={52} y={99}>GPS</Tiny>}
      {device.running && <Tiny $size={12} x={52} y={102} opacity={0.85}>Engine Running</Tiny>}
    </Avatar>
  );
}

function DeviceEntry({ device, children }: { device: Device; children?: React.ReactNode }) {
  return (
    <DeviceItem $running={device.running}>
      <DeviceRow>
        <StatusIcon $running={device.running}>{device.running ? <FaCirclePlay size={20} /> : <FaCirclePause size={20} />}</StatusIcon>
        <DevicePicture device={device} />
        <DeviceInfo>
          <DeviceName>{device.name}</DeviceName>
          <p>ID:</p>
          <p>{device.id}</p>
          <Route>Route: {device.route}</Route>
        </DeviceInfo>
        <DeviceButtons>
          <IconButton $tone={device.running ? "yellow" : "green"} aria-label={device.running ? "Stop" : "Start"}>
            {device.running ? <FaStop size={18} /> : <FaPlay size={18} />}
          </IconButton>
          <IconButton $tone="cyan" aria-label="Settings"><FaGear size={18} /></IconButton>
          <IconButton $tone="red" aria-label="Delete"><FaTrash size={18} /></IconButton>
        </DeviceButtons>
      </DeviceRow>
      {children}
    </DeviceItem>
  );
}

function CardHeader({ name, port, available }: { name: string; port: number; available: number }) {
  return (
    <CardHead>
      <div>
        <CardName><FaTowerBroadcast size={22} />{name}</CardName>
        <CardPort>Port {port} • {available} devices available</CardPort>
      </div>
      <Pill>1 devices</Pill>
    </CardHead>
  );
}

function CardFooter({ active, stopped }: { active: number; stopped: number }) {
  return (
    <CardFoot>
      <Tally $color="#198754"><FaCirclePlay size={18} />{active} active</Tally>
      <Tally $color="#ffc107"><FaCirclePause size={18} />{stopped} stopped</Tally>
      <Tally $color="#dc3545"><FaCircleExclamation size={18} />0 errors</Tally>
    </CardFoot>
  );
}

const tracker: Device = { name: "TK103-2B", id: "357938500195818595584000", route: "paris", body: "#2196f3", running: true, playing: true, gps: true };
const nyc: Device = { name: "EC-546", id: "357938500295898801827000", route: "nyc", body: "#2196f3" };
const london: Device = { name: "GT06N", id: "357938502395912157133000", route: "london", body: "#ff9800", playing: true, gps: true };

function BrowserChrome() {
  return (
    <Chrome>
      <ChromeButton $muted aria-label="Back"><ArrowLeft size={24} strokeWidth={1.3} /></ChromeButton>
      <ChromeButton aria-label="Reload"><RotateCw size={21} strokeWidth={1.6} /></ChromeButton>
      <AddressBar>
        <Info size={20} strokeWidth={1.4} />
        <AddressInput aria-label="Address" defaultValue="localhost:5000" />
        <ChromeIcons>
          <svg width="22" height="22" viewBox="0 0 22 22" fill="none" stroke="#666" strokeWidth="1.3">
            <path d="M2 19L8.500 3L15 19M4.500 13.500H12.500M13 4q3 2.500 2 7M16 2q5 3.500 3.500 9.500" />
          </svg>
          <Star size={22} strokeWidth={1.3} />
        </ChromeIcons>
      </AddressBar>
      <Tools>
        <Slot>
          <svg width="20" height="20" viewBox="0 0 20 20">
            <rect width="20" height="20" fill="#fff" />
            <path d="M2 4h6l1 2h9v10H2z" fill="#f6cf3d" stroke="#8a6d1a" />
            <path d="M2 11h16" stroke="#4d4225" strokeWidth="1.5" />
          </svg>
        </Slot>
        <Slot>
          <svg width="22" height="22" viewBox="0 0 22 22">
            <path d="M11 1l9 5-3 2 3 3-9 5-9-5 3-3-3-2z" fill="#4a0fb0" />
          </svg>
          <CountBadge>21</CountBadge>
        </Slot>
        <Slot>
          <svg width="20" height="22" viewBox="0 0 20 22" fill="none" stroke="#222" strokeWidth="1.500" strokeLinejoin="round">
            <path d="M4 4H8C8 0.500 13 0.500 13 4H17.500V8.500C14 8.500 14 13.500 17.500 13.500V18.500H13C13 22 8 22 8 18.500H4V14C0.300 14 0.300 8.500 4 8.500Z" />
          </svg>
        </Slot>
        <ToolDivider />
        <Slot>
          <svg width="22" height="22" viewBox="0 0 22 22" fill="none" stroke="#222" strokeWidth="1.4" strokeLinejoin="round">
            <path d="M14 6.500L10.500 6.500L8.500 1.500L6.500 7L1 7.500L5 11.500L3.500 18L8.500 15M13 8.500h8M12 12.500h9M13.500 16.500h7.500" />
          </svg>
        </Slot>
        <Slot>
          <svg width="30" height="30" viewBox="0 0 30 30">
            <circle cx="15" cy="15" r="15" fill="#3a0f08" />
            <path d="M1 11A15 15 0 0 1 29 11L22 14H7z" fill="#a51508" />
            <path d="M5 22l1-6 2 6zM10 25l2-8 2 8zM15 22l1-5 2 5zM19 27l2-12 4 11z" fill="#c98a3c" />
            <circle cx="21.500" cy="15" r="1.800" fill="#e0a95c" />
            <circle cx="12" cy="17" r="1.500" fill="#e0a95c" />
          </svg>
        </Slot>
        <Slot>
          <svg width="18" height="4" viewBox="0 0 18 4" fill="#222">
            <circle cx="2" cy="2" r="1.600" /><circle cx="9" cy="2" r="1.600" /><circle cx="16" cy="2" r="1.600" />
          </svg>
        </Slot>
        <Slot>
          <svg width="28" height="28" viewBox="0 0 28 28">
            <path d="M8 2h11l-5 15H4q-5 0-3-6l2-6q1-3 5-3z" fill="#1a8fe0" />
            <path d="M2 12l9-4 3 9H4q-4 0-2-5z" fill="#7ac043" />
            <path d="M12 17l6-10h10v15l-12 5q-5 0-6-6z" fill="#f0633a" />
            <path d="M15 8l4-6h7v8z" fill="#1b4fc4" />
          </svg>
        </Slot>
      </Tools>
    </Chrome>
  );
}

export default function App() {
  return (
    <>
      <GlobalStyle />
      <BrowserChrome />
      <TopSection>
        <Navbar>
          <Brand>
            <FaSatelliteDish size={25} />
            Universal GPS Tracker Emulator - Multi-Device
            <BrandBadge><Badge $tone="green" $large><FaLayerGroup size={19} />Multi-Device Mode</Badge></BrandBadge>
          </Brand>
          <Stats>
            <Stat>Total Devices: <Badge $tone="light">6</Badge></Stat>
            <Stat>Running: <Badge $tone="green">1</Badge></Stat>
            <time>20:31:27</time>
          </Stats>
        </Navbar>
        <MapArea>
          <MapCard>
            <MapHeader>
              <Row $gap={18}>
                <MapTitle><FaMapLocationDot size={28} />Real-Time Device Map</MapTitle>
                <Badge $tone="light" $large>3 devices</Badge>
              </Row>
              <MapButtons>
                <MapButton><FaMinimize size={18} />Fit All</MapButton>
                <MapButton><FaExpand size={18} />Expand</MapButton>
                <MapButton><FaCircleInfo size={18} />Legend</MapButton>
              </MapButtons>
            </MapHeader>
            <MapView>
              <EuropeMap />
              <ZoomControl>
                <ZoomButton aria-label="Zoom in"><svg width="16" height="16"><path d="M0 8h16M8 0v16" stroke="#000" strokeWidth="2" /></svg></ZoomButton>
                <ZoomButton aria-label="Zoom out"><svg width="16" height="16"><path d="M0 8h16" stroke="#000" strokeWidth="2" /></svg></ZoomButton>
              </ZoomControl>
              <Scale>300 km</Scale>
              <Legend>
                <LegendTitle><FaListUl size={17} />Device Status</LegendTitle>
                <ul>
                  <LegendRow><Dot $color="#28a745" />Running</LegendRow>
                  <LegendRow><Dot $color="#6c757d" />Stopped</LegendRow>
                  <LegendRow><Dot $color="#dc3545" />Error</LegendRow>
                </ul>
              </Legend>
              <Attribution>
                <svg width="15" height="10"><rect width="15" height="5" fill="#4c7be1" /><rect y="5" width="15" height="5" fill="#ffd500" /></svg>
                <span><a href="#leaflet">Leaflet</a> | © <a href="#osm">OpenStreetMap</a> contributors</span>
              </Attribution>
            </MapView>
          </MapCard>
        </MapArea>
      </TopSection>

      <LowerSection>
        <QuickCard>
          <QuickHead>
            <QuickTitle><FaCirclePlus size={25} />Quick Device Addition</QuickTitle>
            <Row $gap={15}>
              <ActionButton><FaArrowsRotate size={19} />Refresh</ActionButton>
              <ActionButton $outline><FaGear size={20} />Traccar</ActionButton>
            </Row>
          </QuickHead>
          <Row $gap={0}>
            <Tab $active><FaTowerBroadcast size={23} />By Protocol</Tab>
            <Tab><FaMicrochip size={20} />By Device</Tab>
          </Row>
          <FormColumns>
            <div>
              <FieldGrid $columns={3}>
                <Field>
                  <label htmlFor="protocol">Protocol</label>
                  <SelectWrap>
                    <Select id="protocol" $placeholder><option>Search a protocol...</option></Select>
                    <ChevronDown size={19} />
                  </SelectWrap>
                </Field>
                <Field>
                  <label htmlFor="device">Device</label>
                  <SelectWrap>
                    <Select id="device" $placeholder disabled><option>First select a protocol</option></Select>
                    <ChevronDown size={19} />
                  </SelectWrap>
                </Field>
                <Field>
                  <label htmlFor="info">Info</label>
                  <Notice id="info">No protocol selected</Notice>
                </Field>
              </FieldGrid>
              <Rule />
              <FieldGrid $columns={4}>
                <Field>
                  <label htmlFor="count">Count</label>
                  <TextInput id="count" defaultValue="1" />
                </Field>
                <Field>
                  <label htmlFor="route">Route</label>
                  <SelectWrap>
                    <Select id="route"><option>Paris</option></Select>
                    <ChevronDown size={19} />
                  </SelectWrap>
                </Field>
                <Field>
                  <label htmlFor="add">Action</label>
                  <AddButton id="add"><FaPlus size={19} />Add</AddButton>
                </Field>
                <Field>
                  <label htmlFor="status">Status</label>
                  <Notice id="status" $center><FaCircleInfo size={19} />Select a protocol or device</Notice>
                </Field>
              </FieldGrid>
            </div>
          </FormColumns>
        </QuickCard>

        <ProtocolHead>
          <ProtocolTitle><FaNetworkWired size={37} />Active Protocols (3)</ProtocolTitle>
          <Row $gap={10}>
            <Badge $tone="green">3 popular</Badge>
            <Badge $tone="cyan">0 others</Badge>
          </Row>
        </ProtocolHead>

        <CardGrid>
          <CardSlot>
            <Card>
              <CardHeader name="GPS103" port={5001} available={24} />
              <ScrollBody>
                <Viewport $clipped>
                  <DeviceEntry device={tracker}>
                    <Commands>
                      <CommandLabel><FaTerminal size={20} />GPS103 Commands (9)</CommandLabel>
                      <CommandGroup>
                        <CommandLabel><FaGear size={18} />Engine Control</CommandLabel>
                        <CommandButtons>
                          <CommandButton $color="#ffc107"><FaStop size={16} />Stop Engine</CommandButton>
                          <CommandButton $color="#198754" $faded disabled><FaPlay size={16} />Resume Engine</CommandButton>
                        </CommandButtons>
                      </CommandGroup>
                      <CommandGroup>
                        <CommandLabel><FaLocationDot size={18} />Position</CommandLabel>
                        <CommandButtons>
                          <CommandButton $color="#0d6efd"><FaCircleStop size={18} />Stop Position Reporting</CommandButton>
                          <CommandButton $color="#0d6efd"><FaLocationDot size={18} />Request Single Position</CommandButton>
                          <CommandButton $color="#0d6efd"><FaClock size={18} />Set Position Reporting Interval</CommandButton>
                        </CommandButtons>
                      </CommandGroup>
                      <CommandGroup>
                        <CommandLabel><FaBell size={18} />Alarm</CommandLabel>
                        <CommandButtons>
                          <CommandButton $color="#dc3545"><FaShield size={18} />Arm Alarm</CommandButton>
                          <CommandButton $color="#6c757d" $faded disabled><FaShield size={18} />Disarm Alarm</CommandButton>
                        </CommandButtons>
                      </CommandGroup>
                    </Commands>
                  </DeviceEntry>
                </Viewport>
                <VerticalBar>
                  <Arrow viewBox="0 0 13 13"><path d="M0 10h13L6.500 3z" /></Arrow>
                  <Track $vertical><Thumb $vertical /></Track>
                  <Arrow viewBox="0 0 13 13"><path d="M0 3h13L6.500 10z" /></Arrow>
                </VerticalBar>
              </ScrollBody>
              <HorizontalBar>
                <Arrow viewBox="0 0 13 13"><path d="M10 0v13L3 6.500z" /></Arrow>
                <Track><Thumb /></Track>
                <Arrow viewBox="0 0 13 13"><path d="M3 0v13l7-6.500z" /></Arrow>
              </HorizontalBar>
              <CardFooter active={1} stopped={0} />
            </Card>
          </CardSlot>
          <CardSlot>
            <Card>
              <CardHeader name="TK103" port={5002} available={23} />
              <Viewport><DeviceEntry device={nyc} /></Viewport>
              <CardFooter active={0} stopped={1} />
            </Card>
            <Callout>
              <CalloutArrow viewBox="0 0 36 176" fill="none" stroke="#ed1c24" strokeWidth="4">
                <path d="M10 3H26V87H34L18 168L2 87H10Z" />
              </CalloutArrow>
              <span>Click to start device</span>
            </Callout>
          </CardSlot>
          <CardSlot>
            <Card>
              <CardHeader name="GT06" port={5023} available={80} />
              <Viewport><DeviceEntry device={london} /></Viewport>
              <CardFooter active={0} stopped={1} />
            </Card>
          </CardSlot>
        </CardGrid>
      </LowerSection>
    </>
  );
}
